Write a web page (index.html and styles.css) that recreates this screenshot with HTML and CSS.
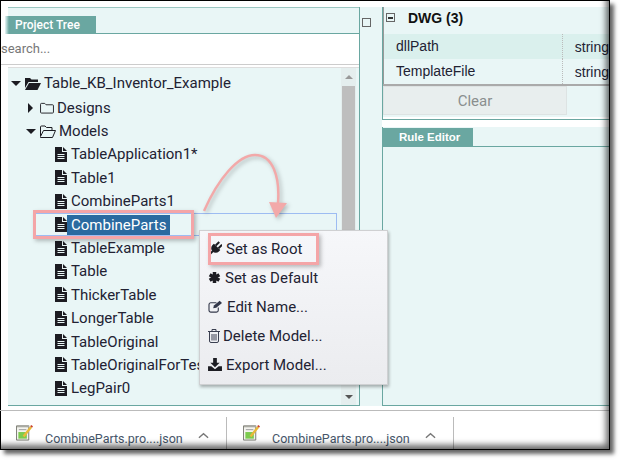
FILE: index.html
```html
<!doctype html>
<html lang="en">

<head>
  <meta charset="utf-8">
  <title>Project Tree</title>
  <link rel="stylesheet" href="styles.css">
</head>

<body>
  <svg class="sprites" width="0" height="0">
    <symbol id="i-file" viewBox="0 0 12 15">
      <path d="M0 0h7v5h5v10H0z" fill="#1c1c22"/>
      <path d="M8 0l4 4H8z" fill="#1c1c22"/>
      <path d="M2.5 7.5h7M2.5 9.5h7M2.5 11.5h7" stroke="#e9f6f6" fill="none"/>
    </symbol>
    <symbol id="i-note" viewBox="0 0 18 17">
      <path d="M.5 1.5h13v15H.5z" fill="#f4f4ee" stroke="#77786e"/>
      <path d="M1 1h13v2H1z" fill="#a9aaa2"/>
      <path d="M2.500 8h9v7h-9z" fill="#7ccb4e"/>
      <path d="M3 5.500h8" stroke="#999"/>
      <path d="M7 12L15 2l2 1.500L9 13.500z" fill="#e8b93a"/>
      <path d="M15 2l1-1.500 2 1.500-1 1.500z" fill="#c8402c"/>
    </symbol>
  </svg>

  <div class="shot">
    <div class="panes">
      <section class="left-pane">
        <div class="tab-strip">
          <span class="tab">Project Tree</span>
        </div>
        <div class="search">search...</div>
        <div class="tree-box">
          <ul class="tree">
            <li class="node root">
              <span class="caret down"></span>
              <svg class="fld" width="16" height="13" viewBox="0 0 16 13"><path d="M0 1h5l1.500 1.500H13V5H3.500L0 11z" fill="#1c1c22"/><path d="M4 6h12l-3.500 7H0z" fill="#1c1c22"/></svg>
              Table_KB_Inventor_Example
            </li>
            <li class="node depth1">
              <span class="caret right"></span>
              <svg class="fld" width="14" height="12" viewBox="0 0 15 13"><path d="M.5 2.500a1 1 0 0 1 1-1h3.500l1.500 1.500h7a1 1 0 0 1 1 1v7a1 1 0 0 1-1 1h-12a1 1 0 0 1-1-1z" fill="none" stroke="#1c1c22"/></svg>
              Designs
            </li>
            <li class="node depth1 open">
              <span class="caret down"></span>
              <svg class="fld" width="16" height="13" viewBox="0 0 16 13"><path d="M.5 11V2a1 1 0 0 1 1-1H5l1.500 1.500H12V5M.5 11.500L3.500 5.500h12l-3 7H.5z" fill="none" stroke="#1c1c22"/></svg>
              Models
            </li>
            <li class="node leaf"><svg class="doc"><use href="#i-file"/></svg>TableApplication1*</li>
            <li class="node leaf"><svg class="doc"><use href="#i-file"/></svg>Table1</li>
            <li class="node leaf"><svg class="doc"><use href="#i-file"/></svg>CombineParts1</li>
            <li class="node leaf selected"><svg class="doc"><use href="#i-file"/></svg><span class="sel-text">CombineParts</span></li>
            <li class="node leaf"><svg class="doc"><use href="#i-file"/></svg>TableExample</li>
            <li class="node leaf"><svg class="doc"><use href="#i-file"/></svg>Table</li>
            <li class="node leaf"><svg class="doc"><use href="#i-file"/></svg>ThickerTable</li>
            <li class="node leaf"><svg class="doc"><use href="#i-file"/></svg>LongerTable</li>
            <li class="node leaf"><svg class="doc"><use href="#i-file"/></svg>TableOriginal</li>
            <li class="node leaf"><svg class="doc"><use href="#i-file"/></svg>TableOriginalForTest</li>
            <li class="node leaf"><svg class="doc"><use href="#i-file"/></svg>LegPair0</li>
          </ul>
          <div class="scrollbar">
            <span class="sb-up"></span>
            <span class="sb-thumb"></span>
            <span class="sb-down"></span>
          </div>
        </div>
      </section>

      <div class="gutter"><span class="max-box"></span></div>

      <section class="right-pane">
        <div class="props">
          <div class="group-head"><span class="minus"></span><b>DWG (3)</b></div>
          <div class="prop-row alt"><span class="prop-name">dllPath</span><span class="prop-val">string</span></div>
          <div class="prop-row"><span class="prop-name">TemplateFile</span><span class="prop-val">string</span></div>
          <div class="clear-wrap"><button class="clear">Clear</button></div>
        </div>
        <div class="rule-editor">
          <div class="tab-strip small">
            <span class="tab rule">Rule Editor</span>
          </div>
        </div>
      </section>
    </div>

    <footer class="downloads">
      <div class="dl">
        <svg class="note"><use href="#i-note"/></svg>
        <span class="dl-name">CombineParts.pro....json</span>
        <svg class="chev" width="11" height="7" viewBox="0 0 12 7"><path d="M1 6l5-4.500L11 6" fill="none" stroke="#777" stroke-width="1.500"/></svg>
      </div>
      <div class="dl">
        <svg class="note"><use href="#i-note"/></svg>
        <span class="dl-name">CombineParts.pro....json</span>
        <svg class="chev" width="11" height="7" viewBox="0 0 12 7"><path d="M1 6l5-4.500L11 6" fill="none" stroke="#777" stroke-width="1.500"/></svg>
      </div>
    </footer>

    <!-- annotations and popup sit over the tree -->
    <svg class="arrow" width="100" height="80" viewBox="0 0 100 80">
      <path d="M1 62C15 30 35 6 52 6 70 6 77 28 75 54" fill="none" stroke="#f2a9a9" stroke-width="2.500"/>
      <path d="M66 53l18 1-11 15z" fill="#f2a9a9"/>
    </svg>
    <span class="mark mark-row"></span>

    <ul class="menu">
      <li>
        <svg class="mi" width="14" height="16" viewBox="0 0 14 16"><g transform="rotate(45 7 8)" fill="#1c1c22"><path d="M2.500 5h9v2a4.500 4.500 0 0 1-9 0z"/><path d="M4 0h2v5H4zM8 0h2v5H8z"/><path d="M6 11h2v7H6z"/></g></svg>
        <span class="mt">Set as Root</span>
      </li>
      <li>
        <svg class="mi" width="13" height="13" viewBox="0 0 14 14"><path d="M7 1v12M1.800 4l10.400 6M12.200 4L1.800 10" stroke="#1c1c22" stroke-width="3.800"/></svg>
        <span class="mt">Set as Default</span>
      </li>
      <li>
        <svg class="mi" width="15" height="13" viewBox="0 0 16 14"><path d="M11 8v3a2 2 0 0 1-2 2H3a2 2 0 0 1-2-2V5a2 2 0 0 1 2-2h6" fill="none" stroke="#33384a" stroke-width="1.200"/><path d="M5.500 9l.8-3L12.500.8l2.500 2.500-6.200 5z" fill="#33384a"/></svg>
        <span class="mt">Edit Name...</span>
      </li>
      <li>
        <svg class="mi narrow" width="12" height="15" viewBox="0 0 12 15"><path d="M1.500 4v9a1.500 1.500 0 0 0 1.500 1.500h6a1.500 1.500 0 0 0 1.500-1.500V4M0 3.500h12M4 3V1.500h4V3M4 6v6.500M6 6v6.500M8 6v6.500" fill="none" stroke="#3a3f50"/></svg>
        <span class="mt">Delete Model...</span>
      </li>
      <li>
        <svg class="mi" width="14" height="13" viewBox="0 0 15 14"><path d="M5.500 0h4v5h3l-5 5-5-5h3z" fill="#1c1c22"/><path d="M0 9h3.500l4 3 4-3H15v5H0z" fill="#1c1c22"/></svg>
        <span class="mt">Export Model...</span>
      </li>
    </ul>
    <span class="mark mark-item"></span>
    <span class="edge"></span>
  </div>
</body>

</html>
```

FILE: styles.css
```css
html,
body {
  margin: 0;
  height: 100%;
  overflow: hidden;
  background: #fff;
}

.sprites {
  position: absolute;
}

.shot {
  position: relative;
  box-sizing: border-box;
  width: 610px;
  height: 450px;
  display: flex;
  flex-direction: column;
  background: #fff;
  border: 1px solid #000;
  box-shadow: 4px 4px 4px rgba(0, 0, 0, 0.6);
  font-family: Roboto, sans-serif;
  color: #222233;
}

.edge {
  position: absolute;
  inset: 0;
  pointer-events: none;
  box-shadow: inset -6px -7px 6px -3px rgba(0, 0, 0, 0.6);
}

.panes {
  display: flex;
  height: 405px;
  padding-top: 6px;
  box-sizing: border-box;
}

/* left side */
.left-pane {
  width: 359px;
  display: flex;
  flex-direction: column;
  box-sizing: border-box;
  border-right: 1px solid #6aa7a1;
}

.tab-strip {
  height: 27px;
  box-sizing: border-box;
  margin-left: 7px;
  padding-top: 6px;
  background: #e9f6f6;
  border-top: 1px solid #9bc7c2;
  border-bottom: 1px solid #6aa7a1;
}

.tab {
  display: inline-block;
  width: 91px;
  height: 19px;
  box-sizing: border-box;
  margin-left: -3px;
  padding-left: 10px;
  background: linear-gradient(to right, #e9f6f6, #6aa7a1 4px);
  color: #fff;
  font-size: 12px;
  font-weight: 500;
  line-height: 19px;
}

.search {
  height: 30px;
  background: #fff;
  border-bottom: 1px solid #ccc;
  font-size: 13px;
  line-height: 29px;
  color: #777;
}

.tree-box {
  flex: 1;
  min-height: 0;
  display: flex;
  margin-top: 2px;
  margin-left: 7px;
  background: #e9f6f6;
  border-top: 1px solid #ddd;
  border-bottom: 1px solid #6aa7a1;
}

.tree {
  flex: 1;
  min-width: 0;
  list-style: none;
  margin: 0;
  padding: 2px 0 0 1px;
  font-size: 15px;
}

.node {
  height: 23.4px;
  display: flex;
  align-items: center;
  white-space: nowrap;
}

.root {
  height: 26px;
  padding-left: 2px;
}

.depth1 {
  padding-left: 19px;
}

.depth1.open {
  padding-left: 17px;
}

.leaf {
  padding-left: 46px;
}

.caret {
  width: 0;
  height: 0;
  margin-right: 4px;
}

.caret.down {
  border: 5px solid transparent;
  border-top: 5px solid #1c1c22;
  border-bottom: 0;
}

.caret.right {
  border: 5px solid transparent;
  border-left: 5px solid #1c1c22;
  border-right: 0;
  margin-right: 7px;
}

.fld {
  margin-right: 3px;
}

.doc {
  width: 12px;
  height: 15px;
  margin-right: 4px;
  flex: none;
}

.selected {
  box-sizing: border-box;
  margin-left: 26px;
  margin-right: 4px;
  padding-left: 19px;
  border: 1px solid #9dbcf2;
}

.sel-text {
  background: #2a6aa0;
  color: #fff;
  padding: 0 4px;
  margin-left: -4px;
  line-height: 20px;
}

.scrollbar {
  width: 15px;
  margin-right: 3px;
  display: flex;
  flex-direction: column;
  align-items: center;
  background: #e4eeee;
}

.sb-up {
  margin-top: 7px;
  border: 4px solid transparent;
  border-bottom: 4px solid #999;
  border-top: 0;
}

.sb-thumb {
  width: 13px;
  height: 190px;
  margin-top: 7px;
  background: #bebebe;
}

.sb-down {
  margin-top: auto;
  margin-bottom: 6px;
  border: 4px solid transparent;
  border-top: 4px solid #555;
  border-bottom: 0;
}

/* gutter between panes */
.gutter {
  width: 22px;
  background: #e9f6f6;
  padding: 11px 0 0 2px;
  box-sizing: border-box;
}

.max-box {
  display: block;
  width: 7px;
  height: 7px;
  border: 1px solid #666;
}

/* right side */
.right-pane {
  flex: 1;
  min-width: 0;
  display: flex;
  flex-direction: column;
  gap: 7px;
  overflow: hidden;
  white-space: nowrap;
  font-family: "Liberation Sans", Arial, sans-serif;
}

.props {
  height: 113px;
  box-sizing: border-box;
  background: #fff;
  border-left: 1px solid #6aa7a1;
  border-bottom: 1px solid #6aa7a1;
}

.group-head {
  height: 27px;
  box-sizing: border-box;
  display: flex;
  align-items: center;
  padding-bottom: 6px;
  background: #e9f6f6;
  border-left: 1px solid #999;
  color: #111;
  font-size: 14px;
}

.minus {
  width: 7px;
  height: 7px;
  margin: 0 13px 0 2px;
  border: 1px solid #666;
  background: linear-gradient(#333, #333) center / 5px 2px no-repeat;
}

.prop-row {
  height: 25px;
  box-sizing: border-box;
  display: flex;
  align-items: center;
  background: #e9f6f6;
  border-left: 1px solid #999;
  font-size: 14px;
  color: #222233;
}

.prop-row.alt {
  background: #daf0ed;
}

.prop-name {
  width: 166px;
  height: 100%;
  line-height: 25px;
  padding-left: 12px;
  border-right: 1px dotted #bbb;
}

.prop-val {
  padding-left: 12px;
}

.clear-wrap {
  height: 33px;
  box-sizing: border-box;
  background: #e9f6f6;
  border-top: 2px solid #aaa;
}

.clear {
  display: block;
  width: 184px;
  height: 29px;
  padding: 0;
  background: #e8eeee;
  border: 1px solid #dde3e3;
  color: #8a8f8f;
  font-family: Roboto, sans-serif;
  font-size: 15px;
}

.rule-editor {
  flex: 1;
  min-height: 0;
  background: #e9f6f6;
  border-left: 1px solid #6aa7a1;
  border-bottom: 1px solid #6aa7a1;
}

.tab-strip.small {
  height: 20px;
  margin: 0;
  padding: 0;
  border-top: 0;
}

.tab.rule {
  width: 90px;
  margin: 0;
  padding-left: 16px;
  background: #6aa7a1;
  font-family: "Liberation Sans", Arial, sans-serif;
  font-weight: 700;
  font-size: 11.500px;
}

/* download bar */
.downloads {
  flex: 1;
  display: flex;
  padding-top: 6px;
  margin: 4px 0 0 -1px;
  border-top: 1px solid #bbb;
  box-sizing: border-box;
}

.dl {
  width: 227px;
  box-sizing: border-box;
  display: flex;
  align-items: flex-end;
  padding: 0 0 3px 16px;
  border-right: 1px solid #bbb;
}

.note {
  width: 17px;
  height: 17px;
  margin: 0 12px 5px 0;
}

.dl-name {
  font-size: 12.500px;
  color: #46566a;
  width: 138px;
  white-space: nowrap;
}

.chev {
  margin: 0 0 7px 15px;
}

/* context menu */
.menu {
  position: absolute;
  left: 198px;
  top: 229px;
  width: 189px;
  height: 155px;
  box-sizing: border-box;
  margin: 0;
  padding: 3px 0 0 8px;
  list-style: none;
  background: linear-gradient(#f6f7fa, #ebecef);
  border: 1px solid #cfd0d2;
  box-shadow: 1px 2px 3px rgba(0, 0, 0, 0.3);
  font-size: 15px;
}

.menu li {
  height: 29px;
  display: flex;
  align-items: center;
}

.mi {
  margin-right: 4px;
  flex: none;
}

.mi.narrow {
  margin-right: 3px;
}

.mark {
  position: absolute;
  box-sizing: border-box;
  border: 3px solid #f4a5a7;
  box-shadow: 2px 2px 4px rgba(0, 0, 0, 0.25);
  pointer-events: none;
}

.mark-row {
  left: 32px;
  top: 209px;
  width: 161px;
  height: 29px;
}

.mark-item {
  left: 207px;
  top: 232px;
  width: 111px;
  height: 32px;
}

.arrow {
  position: absolute;
  left: 202px;
  top: 148px;
  filter: drop-shadow(2px 2px 2px rgba(0, 0, 0, 0.25));
}
```
